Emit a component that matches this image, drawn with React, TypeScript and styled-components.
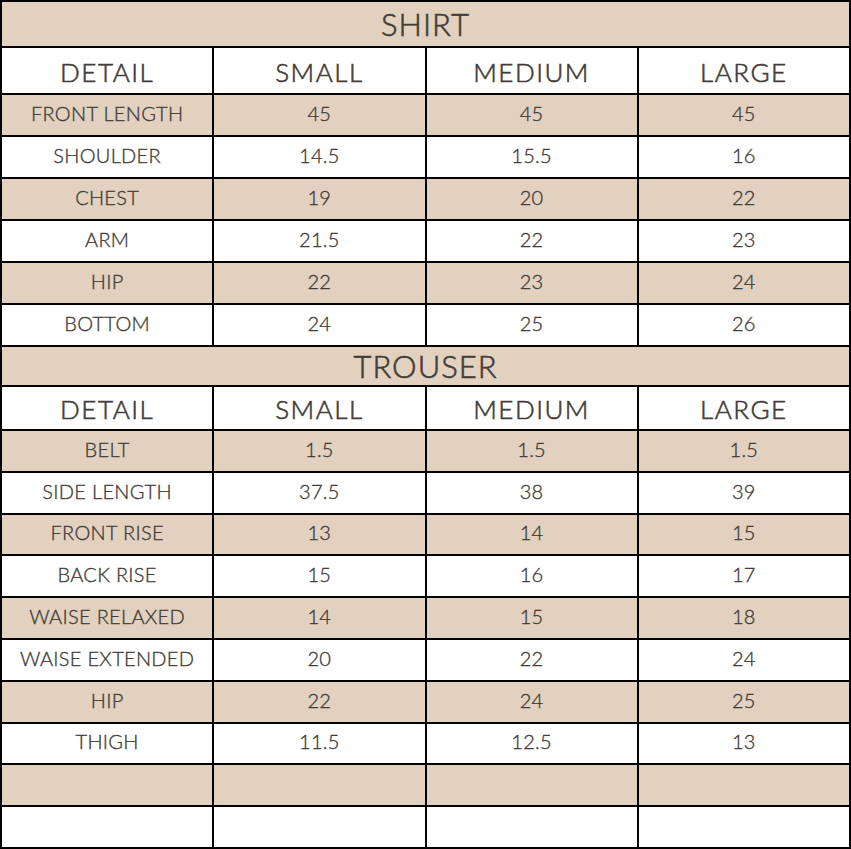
import React from 'react';
import styled, {createGlobalStyle} from "styled-components";

const GlobalStyle = createGlobalStyle`
  html, body {
    margin: 0;
    padding: 0;
    background: #ffffff;
  }
`

const BEIGE = "#e2d1bf"
const INK = "#423d38"

const StyledChart = styled.div`
  display: grid;
  grid-template-columns: repeat(4, 1fr);
  grid-template-rows: 44px 45px repeat(6, 40px) 38px 42px repeat(10, 1fr);
  gap: 2px;
  padding: 2px;
  width: 851px;
  height: 849px;
  box-sizing: border-box;
  background: #000000;
  font-family: Lato, "Liberation Sans", sans-serif;
  font-weight: 300;
  color: ${INK};
`

const StyledTitle = styled.div`
  grid-column: 1 / -1;
  display: flex;
  align-items: center;
  justify-content: center;
  background: ${BEIGE};
  font-size: 31px;
  letter-spacing: 1px;
  padding-bottom: 1px;
  -webkit-text-stroke: 0.6px ${INK};
`

const StyledHead = styled.div`
  display: flex;
  align-items: center;
  justify-content: center;
  background: #ffffff;
  font-size: 26px;
  letter-spacing: 1.5px;
  padding-top: 2px;
  -webkit-text-stroke: 0.6px ${INK};
`

const StyledCell = styled.div<{ $shaded: boolean }>`
  display: flex;
  align-items: center;
  justify-content: center;
  background: ${props => props.$shaded ? BEIGE : "#ffffff"};
  font-size: 20px;
  letter-spacing: 0.3px;
  white-space: nowrap;
  padding-bottom: 4px;
  -webkit-text-stroke: 0.35px ${INK};
`

type Row = [string, string, string, string]

const shirt: Row[] = [
    ["FRONT LENGTH", "45", "45", "45"],
    ["SHOULDER", "14.5", "15.5", "16"],
    ["CHEST", "19", "20", "22"],
    ["ARM", "21.5", "22", "23"],
    ["HIP", "22", "23", "24"],
    ["BOTTOM", "24", "25", "26"],
]

const trouser: Row[] = [
    ["BELT", "1.5", "1.5", "1.5"],
    ["SIDE LENGTH", "37.5", "38", "39"],
    ["FRONT RISE", "13", "14", "15"],
    ["BACK RISE", "15", "16", "17"],
    ["WAISE RELAXED", "14", "15", "18"],
    ["WAISE EXTENDED", "20", "22", "24"],
    ["HIP", "22", "24", "25"],
    ["THIGH", "11.5", "12.5", "13"],
    ["", "", "", ""],
    ["", "", "", ""],
]

const headings = ["DETAIL", "SMALL", "MEDIUM", "LARGE"]

const Section = ({title, rows}: { title: string, rows: Row[] }) => (
    <>
        <StyledTitle>{title}</StyledTitle>
        {headings.map(h => <StyledHead key={h}>{h}</StyledHead>)}
        {rows.map((row, i) =>
            row.map((value, j) =>
                <StyledCell key={`${i}-${j}`} $shaded={i % 2 === 0}>{value}</StyledCell>
            )
        )}
    </>
)

const App = () => {
    return (
        <>
            <GlobalStyle/>
            <StyledChart>
                <Section title="SHIRT" rows={shirt}/>
                <Section title="TROUSER" rows={trouser}/>
            </StyledChart>
        </>
    )
}

export default App;
